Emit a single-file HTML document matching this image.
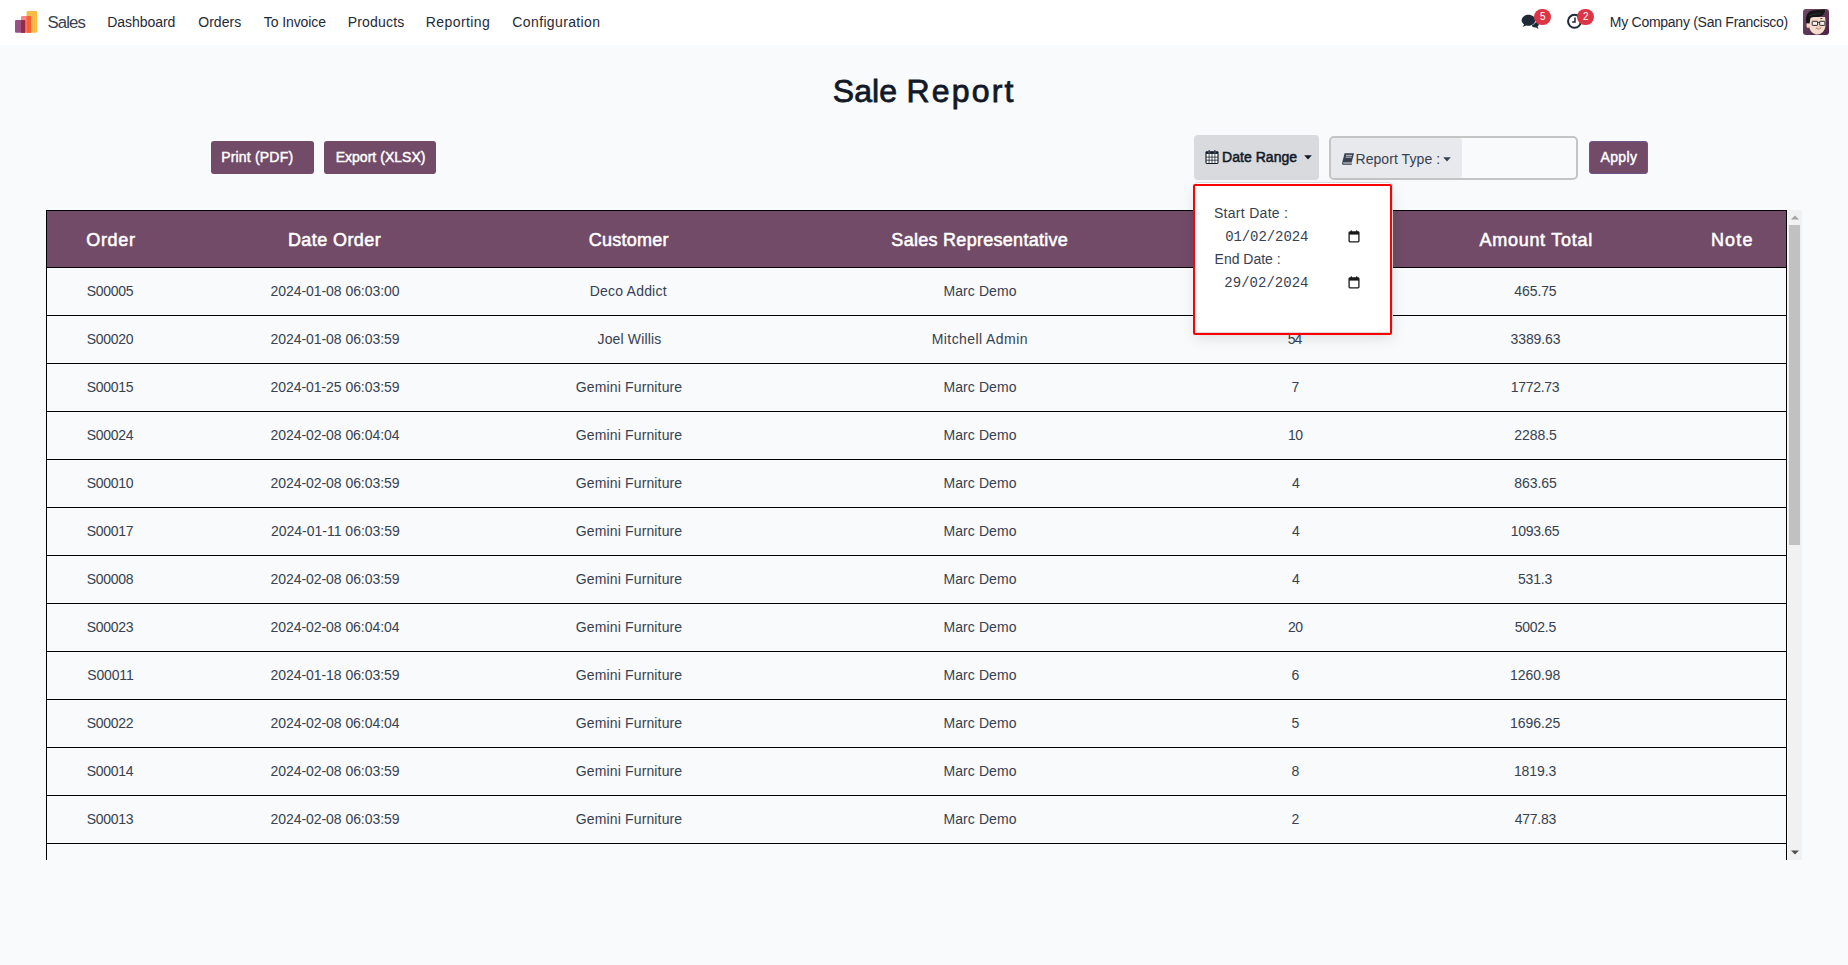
<!DOCTYPE html>
<html lang="en"><head><meta charset="utf-8"><title>Odoo - Sale Report</title>
<style>
html,body{margin:0;padding:0}
body{width:1848px;height:965px;overflow:hidden;position:relative;background:#f9fafb;font-family:"Liberation Sans",sans-serif;font-size:14px;color:#374151}
.t{position:absolute;white-space:pre;text-align:center;margin:0;padding:0}
.abs{position:absolute}
#nav{position:absolute;left:0;top:0;width:1848px;height:45px;background:#fff}
.btn{position:absolute;background:#714b67;border-radius:3px}
.badge{position:absolute;background:#dc3545;border-radius:8px;width:17px;height:16px}
#tbl{position:absolute;left:46px;top:210px;width:1741px;height:650px;overflow:hidden}
.hdr{position:absolute;left:0;top:0;width:1739px;height:56px;background:#714b67;border:1px solid #000}
.row{position:absolute;left:0;width:1739px;height:47px;border:1px solid #000;border-top:none}
#sb{position:absolute;left:1788px;top:210px;width:14px;height:650px;background:#f1f1f1}
#thumb{position:absolute;left:1789px;top:225px;width:11px;height:320px;background:#c1c1c1}
#ddm{position:absolute;left:1194px;top:182px;width:197px;height:149px;border:1px solid #d8dadd;border-radius:4px;background:#fff;box-shadow:0 6px 14px rgba(0,0,0,.10)}
#dd{position:absolute;left:1193px;top:184px;width:195px;height:147px;border:2px solid #ff0000;border-radius:2px}
</style></head><body>

<div id="nav"></div>
<svg class="abs" style="left:14px;top:10px" width="24" height="24" viewBox="0 0 24 24">
<rect x="12.6" y="1" width="10.5" height="21.8" rx="1.4" fill="#fbb945"/>
<rect x="7" y="6.1" width="10" height="16.7" rx="1.2" fill="#f87a7a" opacity="0.9"/>
<rect x="12.6" y="6.1" width="4.4" height="16.7" fill="#f9602b"/>
<rect x="1" y="10.1" width="10.2" height="12.7" rx="1.2" fill="#985184"/>
<rect x="7" y="10.1" width="4.2" height="12.7" fill="#962b48"/>
</svg>
<div class="t" id="brand" style="left:-133.38px;top:9.00px;width:400px;line-height:28px;font-size:16.8px;font-weight:400;color:#374151;letter-spacing:-0.92px;text-indent:-0.92px;">Sales</div>
<div class="t" id="nav0" style="left:-58.69px;top:12.00px;width:400px;line-height:20px;font-size:14px;font-weight:400;color:#1f2937;letter-spacing:-0.05px;text-indent:-0.05px;">Dashboard</div>
<div class="t" id="nav1" style="left:19.76px;top:12.00px;width:400px;line-height:20px;font-size:14px;font-weight:400;color:#1f2937;letter-spacing:0.064px;text-indent:0.064px;">Orders</div>
<div class="t" id="nav2" style="left:94.90px;top:12.00px;width:400px;line-height:20px;font-size:14px;font-weight:400;color:#1f2937;letter-spacing:-0.1px;text-indent:-0.1px;">To Invoice</div>
<div class="t" id="nav3" style="left:175.98px;top:12.00px;width:400px;line-height:20px;font-size:14px;font-weight:400;color:#1f2937;letter-spacing:0.204px;text-indent:0.204px;">Products</div>
<div class="t" id="nav4" style="left:257.79px;top:12.00px;width:400px;line-height:20px;font-size:14px;font-weight:400;color:#1f2937;letter-spacing:0.41px;text-indent:0.41px;">Reporting</div>
<div class="t" id="nav5" style="left:356.21px;top:12.00px;width:400px;line-height:20px;font-size:14px;font-weight:400;color:#1f2937;letter-spacing:0.368px;text-indent:0.368px;">Configuration</div>
<div class="t" id="company" style="left:1499.05px;top:12.00px;width:400px;line-height:20px;font-size:14px;font-weight:400;color:#1f2937;letter-spacing:-0.269px;text-indent:-0.269px;">My Company (San Francisco)</div>
<svg class="abs" style="left:1520px;top:13px" width="20" height="18" viewBox="0 0 20 18">
<path d="M11.2 11.2 C11.6 13.6 14 14.9 16.2 14.4 L18.6 16.2 L17.6 13.6 C19.2 12.4 19.4 10.2 18 8.6 Z" fill="#1f2937"/>
<ellipse cx="8.4" cy="7.3" rx="7.2" ry="5.9" fill="#fff"/>
<path d="M8.4 1.8 C4.6 1.8 1.6 4.2 1.6 7.2 C1.6 8.9 2.6 10.4 4.1 11.4 L2.6 13.9 L6.3 12.4 C7 12.6 7.7 12.7 8.4 12.7 C12.2 12.7 15.2 10.3 15.2 7.2 C15.2 4.2 12.2 1.8 8.4 1.8 Z" fill="#1f2937"/>
</svg>
<div class="badge" style="left:1534px;top:9px"></div>
<div class="t" id="b5" style="left:1342.71px;top:7.00px;width:400px;line-height:20px;font-size:10px;font-weight:400;color:#fff;letter-spacing:0px;">5</div>
<svg class="abs" style="left:1566px;top:12px" width="18" height="18" viewBox="0 0 18 18">
<circle cx="8.5" cy="9.3" r="6.45" fill="none" stroke="#1f2937" stroke-width="2"/>
<path d="M9 5.6 V10.1 H6.1" fill="none" stroke="#1f2937" stroke-width="1.5"/>
</svg>
<div class="badge" style="left:1577px;top:9px"></div>
<div class="t" id="b2" style="left:1385.71px;top:7.00px;width:400px;line-height:20px;font-size:10px;font-weight:400;color:#fff;letter-spacing:0px;">2</div>
<svg class="abs" style="left:1803px;top:9px" width="26" height="26" viewBox="0 0 26 26">
<defs><linearGradient id="ag" x1="0" y1="0" x2="1" y2="1"><stop offset="0" stop-color="#6f4a68"/><stop offset="1" stop-color="#4c2342"/></linearGradient>
<clipPath id="ac"><rect width="26" height="26" rx="3"/></clipPath></defs>
<g clip-path="url(#ac)">
<rect width="26" height="26" fill="url(#ag)"/>
<ellipse cx="5" cy="16" rx="1.5" ry="3" fill="#f3d2bf"/>
<path d="M5.8 8 C5.6 12 5.6 16 6.6 19.5 C7.8 23.2 11 25.6 14.4 25.5 C18 25.4 21.2 22.6 22.2 18.5 C22.8 15.5 22.6 11 22 8 Z" fill="#f8dccb"/>
<path d="M3.4 14.2 C2.4 9.5 3 4.5 7.5 2 C10 0.6 14 1.2 17 0.9 C19.5 0.6 21.5 0.2 21.9 1 C22.4 3.6 20.5 6.4 17 7.6 C14 8.5 10 7.4 7.4 9.2 L6.6 14.5 Z" fill="#161616"/>
<path d="M6 7 C9 5 13 5.6 17.5 4.2" stroke="#3a3a3a" stroke-width="0.7" fill="none"/>
<rect x="9.2" y="12.3" width="5.4" height="4.1" rx="0.5" fill="#f4efe9" stroke="#2e2e2e" stroke-width="1"/>
<rect x="16.7" y="12.3" width="5.2" height="4.1" rx="0.5" fill="#f4efe9" stroke="#2e2e2e" stroke-width="1"/>
<path d="M14.6 13.4 H16.7" stroke="#2e2e2e" stroke-width="0.9"/>
<path d="M17.3 9.6 H19.4" stroke="#222" stroke-width="0.8"/>
<path d="M12.9 19 Q15.6 19.8 18.2 18.8 Q16 21.8 12.9 19 Z" fill="#fff" stroke="#8a5a4a" stroke-width="0.5"/>
<path d="M15.2 17.4 Q16 17.9 16.8 17.3" stroke="#e9a993" stroke-width="0.6" fill="none"/>
</g></svg>
<h1 style="margin:0;font-size:0;line-height:0">
<span class="t" id="title1" style="left:664.85px;top:69.00px;width:400px;line-height:44px;font-size:32px;font-weight:400;color:#111827;letter-spacing:0.052px;text-indent:0.052px;-webkit-text-stroke:0.8px #111827;">Sale</span>
<span class="t" id="title2" style="left:760.02px;top:69.00px;width:400px;line-height:44px;font-size:32px;font-weight:400;color:#111827;letter-spacing:2.176px;text-indent:2.176px;-webkit-text-stroke:0.8px #111827;">Report</span>
</h1>
<div class="btn" style="left:211px;top:141px;width:103px;height:33px"></div>
<div class="btn" style="left:324px;top:141px;width:112px;height:33px"></div>
<div class="t" id="print" style="left:57.10px;top:147.00px;width:400px;line-height:20px;font-size:14px;font-weight:400;color:#fff;letter-spacing:0.192px;text-indent:0.192px;-webkit-text-stroke:0.45px #fff;">Print (PDF)</div>
<div class="t" id="export" style="left:180.57px;top:147.00px;width:400px;line-height:20px;font-size:14px;font-weight:400;color:#fff;letter-spacing:0.033px;text-indent:0.033px;-webkit-text-stroke:0.45px #fff;">Export (XLSX)</div>
<div class="abs" style="left:1194px;top:135.3px;width:124.8px;height:44.3px;background:#d8dadd;border-radius:4px"></div>
<svg class="abs" style="left:1205px;top:149px" width="14" height="16" viewBox="0 0 14 16">
<rect x="1" y="2.7" width="12" height="11.8" rx="0.9" fill="#fff" stroke="#111827" stroke-width="1.1"/>
<rect x="1" y="2.7" width="12" height="2.2" fill="#111827"/>
<rect x="3.3" y="0.9" width="1.7" height="3.2" rx="0.8" fill="#111827" stroke="#d8dadd" stroke-width="0.3"/>
<rect x="9" y="0.9" width="1.7" height="3.2" rx="0.8" fill="#111827" stroke="#d8dadd" stroke-width="0.3"/>
<path d="M1 8.1H13M1 11.2H13M4.1 4.9V14.4M7 4.9V14.4M9.9 4.9V14.4" stroke="#111827" stroke-width="0.75" fill="none"/>
</svg>
<div class="t" id="daterange" style="left:1059.60px;top:147.00px;width:400px;line-height:20px;font-size:14px;font-weight:400;color:#111827;letter-spacing:0.039px;text-indent:0.039px;-webkit-text-stroke:0.5px #111827;">Date Range</div>
<svg class="abs" style="left:1304px;top:155px" width="8" height="5" viewBox="0 0 8 5"><path d="M0.2 0.2H7.8L4 4.6Z" fill="#111827"/></svg>
<div class="abs" style="left:1329.2px;top:136.1px;width:245.3px;height:39.5px;border:2px solid #c4c4c4;border-radius:5px;background:#f9fafb"></div>
<div class="abs" style="left:1331.2px;top:138.1px;width:130.8px;height:39.5px;background:#e7e9ed;border-radius:3px"></div>
<svg class="abs" style="left:1341px;top:152px" width="14" height="14" viewBox="0 0 14 14">
<path d="M3.6 1.2 H13 L10.6 10.6 H1.2 Z" fill="#374151"/>
<path d="M1.2 10.6 C0.6 12 1.2 12.8 2.4 12.8 H10.6 L11.2 11.6 H2.6 C2 11.6 2 10.8 2.6 10.6 Z" fill="#374151"/>
<path d="M5 3.4H11M4.6 5.2H10.6" stroke="#e7e9ed" stroke-width="0.8"/>
</svg>
<div class="t" id="reptype" style="left:1197.81px;top:149.00px;width:400px;line-height:20px;font-size:14px;font-weight:400;color:#374151;letter-spacing:0.072px;text-indent:0.072px;">Report Type :</div>
<svg class="abs" style="left:1443px;top:157px" width="8" height="5" viewBox="0 0 8 5"><path d="M0.2 0.2H7.8L4 4.6Z" fill="#374151"/></svg>
<div class="btn" style="left:1589.3px;top:140.9px;width:56.6px;height:31px;border:1px solid #6a5688"></div>
<div class="t" id="apply" style="left:1418.76px;top:147.00px;width:400px;line-height:20px;font-size:14px;font-weight:400;color:#fff;letter-spacing:0.36px;text-indent:0.36px;-webkit-text-stroke:0.45px #fff;">Apply</div>
<div id="tbl">
<div class="hdr"></div>
<div class="row" style="top:58px"></div>
<div class="row" style="top:106px"></div>
<div class="row" style="top:154px"></div>
<div class="row" style="top:202px"></div>
<div class="row" style="top:250px"></div>
<div class="row" style="top:298px"></div>
<div class="row" style="top:346px"></div>
<div class="row" style="top:394px"></div>
<div class="row" style="top:442px"></div>
<div class="row" style="top:490px"></div>
<div class="row" style="top:538px"></div>
<div class="row" style="top:586px"></div>
<div class="row" style="top:634px"></div>
</div>
<div class="t" id="h0" style="left:-89.40px;top:226.00px;width:400px;line-height:28px;font-size:18px;font-weight:400;color:#fff;letter-spacing:0.64px;text-indent:0.64px;-webkit-text-stroke:0.55px #fff;">Order</div>
<div class="t" id="h1" style="left:134.32px;top:226.00px;width:400px;line-height:28px;font-size:18px;font-weight:400;color:#fff;letter-spacing:0.406px;text-indent:0.406px;-webkit-text-stroke:0.55px #fff;">Date Order</div>
<div class="t" id="h2" style="left:428.67px;top:226.00px;width:400px;line-height:28px;font-size:18px;font-weight:400;color:#fff;letter-spacing:0.237px;text-indent:0.237px;-webkit-text-stroke:0.55px #fff;">Customer</div>
<div class="t" id="h3" style="left:779.62px;top:226.00px;width:400px;line-height:28px;font-size:18px;font-weight:400;color:#fff;letter-spacing:0.283px;text-indent:0.283px;-webkit-text-stroke:0.55px #fff;">Sales Representative</div>
<div class="t" id="h4" style="left:1095.00px;top:226.00px;width:400px;line-height:28px;font-size:18px;font-weight:400;color:#fff;letter-spacing:0px;-webkit-text-stroke:0.55px #fff;">Total Quantity</div>
<div class="t" id="h5" style="left:1335.83px;top:226.00px;width:400px;line-height:28px;font-size:18px;font-weight:400;color:#fff;letter-spacing:0.737px;text-indent:0.737px;-webkit-text-stroke:0.55px #fff;">Amount Total</div>
<div class="t" id="h6" style="left:1531.74px;top:226.00px;width:400px;line-height:28px;font-size:18px;font-weight:400;color:#fff;letter-spacing:1.227px;text-indent:1.227px;-webkit-text-stroke:0.55px #fff;">Note</div>
<div class="t" id="r0c0" style="left:-89.90px;top:281.00px;width:400px;line-height:20px;font-size:14px;font-weight:400;color:#374151;letter-spacing:-0.32px;text-indent:-0.32px;">S00005</div>
<div class="t" id="r0c1" style="left:135.00px;top:281.00px;width:400px;line-height:20px;font-size:14px;font-weight:400;color:#374151;letter-spacing:-0.05px;text-indent:-0.05px;">2024-01-08 06:03:00</div>
<div class="t" id="r0c2" style="left:428.20px;top:281.00px;width:400px;line-height:20px;font-size:14px;font-weight:400;color:#374151;letter-spacing:0.2px;text-indent:0.2px;">Deco Addict</div>
<div class="t" id="r0c3" style="left:780.00px;top:281.00px;width:400px;line-height:20px;font-size:14px;font-weight:400;color:#374151;letter-spacing:0.08px;text-indent:0.08px;">Marc Demo</div>
<div class="t" id="r0c4" style="left:1095.50px;top:281.00px;width:400px;line-height:20px;font-size:14px;font-weight:400;color:#374151;letter-spacing:0px;">5</div>
<div class="t" id="r0c5" style="left:1335.50px;top:281.00px;width:400px;line-height:20px;font-size:14px;font-weight:400;color:#374151;letter-spacing:-0.112px;text-indent:-0.112px;">465.75</div>
<div class="t" id="r1c0" style="left:-89.90px;top:329.00px;width:400px;line-height:20px;font-size:14px;font-weight:400;color:#374151;letter-spacing:-0.32px;text-indent:-0.32px;">S00020</div>
<div class="t" id="r1c1" style="left:135.00px;top:329.00px;width:400px;line-height:20px;font-size:14px;font-weight:400;color:#374151;letter-spacing:-0.05px;text-indent:-0.05px;">2024-01-08 06:03:59</div>
<div class="t" id="r1c2" style="left:429.40px;top:329.00px;width:400px;line-height:20px;font-size:14px;font-weight:400;color:#374151;letter-spacing:0.152px;text-indent:0.152px;">Joel Willis</div>
<div class="t" id="r1c3" style="left:779.60px;top:329.00px;width:400px;line-height:20px;font-size:14px;font-weight:400;color:#374151;letter-spacing:0.427px;text-indent:0.427px;">Mitchell Admin</div>
<div class="t" id="r1c4" style="left:1095.10px;top:329.00px;width:400px;line-height:20px;font-size:14px;font-weight:400;color:#374151;letter-spacing:-0.96px;text-indent:-0.96px;">54</div>
<div class="t" id="r1c5" style="left:1335.50px;top:329.00px;width:400px;line-height:20px;font-size:14px;font-weight:400;color:#374151;letter-spacing:-0.12px;text-indent:-0.12px;">3389.63</div>
<div class="t" id="r2c0" style="left:-89.90px;top:377.00px;width:400px;line-height:20px;font-size:14px;font-weight:400;color:#374151;letter-spacing:-0.32px;text-indent:-0.32px;">S00015</div>
<div class="t" id="r2c1" style="left:135.00px;top:377.00px;width:400px;line-height:20px;font-size:14px;font-weight:400;color:#374151;letter-spacing:-0.05px;text-indent:-0.05px;">2024-01-25 06:03:59</div>
<div class="t" id="r2c2" style="left:429.00px;top:377.00px;width:400px;line-height:20px;font-size:14px;font-weight:400;color:#374151;letter-spacing:0.136px;text-indent:0.136px;">Gemini Furniture</div>
<div class="t" id="r2c3" style="left:780.00px;top:377.00px;width:400px;line-height:20px;font-size:14px;font-weight:400;color:#374151;letter-spacing:0.08px;text-indent:0.08px;">Marc Demo</div>
<div class="t" id="r2c4" style="left:1095.50px;top:377.00px;width:400px;line-height:20px;font-size:14px;font-weight:400;color:#374151;letter-spacing:0px;">7</div>
<div class="t" id="r2c5" style="left:1335.10px;top:377.00px;width:400px;line-height:20px;font-size:14px;font-weight:400;color:#374151;letter-spacing:-0.281px;text-indent:-0.281px;">1772.73</div>
<div class="t" id="r3c0" style="left:-89.90px;top:425.00px;width:400px;line-height:20px;font-size:14px;font-weight:400;color:#374151;letter-spacing:-0.32px;text-indent:-0.32px;">S00024</div>
<div class="t" id="r3c1" style="left:135.00px;top:425.00px;width:400px;line-height:20px;font-size:14px;font-weight:400;color:#374151;letter-spacing:-0.053px;text-indent:-0.053px;">2024-02-08 06:04:04</div>
<div class="t" id="r3c2" style="left:429.00px;top:425.00px;width:400px;line-height:20px;font-size:14px;font-weight:400;color:#374151;letter-spacing:0.136px;text-indent:0.136px;">Gemini Furniture</div>
<div class="t" id="r3c3" style="left:780.00px;top:425.00px;width:400px;line-height:20px;font-size:14px;font-weight:400;color:#374151;letter-spacing:0.08px;text-indent:0.08px;">Marc Demo</div>
<div class="t" id="r3c4" style="left:1095.50px;top:425.00px;width:400px;line-height:20px;font-size:14px;font-weight:400;color:#374151;letter-spacing:-0.56px;text-indent:-0.56px;">10</div>
<div class="t" id="r3c5" style="left:1335.50px;top:425.00px;width:400px;line-height:20px;font-size:14px;font-weight:400;color:#374151;letter-spacing:-0.064px;text-indent:-0.064px;">2288.5</div>
<div class="t" id="r4c0" style="left:-89.90px;top:473.00px;width:400px;line-height:20px;font-size:14px;font-weight:400;color:#374151;letter-spacing:-0.32px;text-indent:-0.32px;">S00010</div>
<div class="t" id="r4c1" style="left:135.00px;top:473.00px;width:400px;line-height:20px;font-size:14px;font-weight:400;color:#374151;letter-spacing:-0.05px;text-indent:-0.05px;">2024-02-08 06:03:59</div>
<div class="t" id="r4c2" style="left:429.00px;top:473.00px;width:400px;line-height:20px;font-size:14px;font-weight:400;color:#374151;letter-spacing:0.136px;text-indent:0.136px;">Gemini Furniture</div>
<div class="t" id="r4c3" style="left:780.00px;top:473.00px;width:400px;line-height:20px;font-size:14px;font-weight:400;color:#374151;letter-spacing:0.08px;text-indent:0.08px;">Marc Demo</div>
<div class="t" id="r4c4" style="left:1095.90px;top:473.00px;width:400px;line-height:20px;font-size:14px;font-weight:400;color:#374151;letter-spacing:0px;">4</div>
<div class="t" id="r4c5" style="left:1335.50px;top:473.00px;width:400px;line-height:20px;font-size:14px;font-weight:400;color:#374151;letter-spacing:-0.064px;text-indent:-0.064px;">863.65</div>
<div class="t" id="r5c0" style="left:-89.90px;top:521.00px;width:400px;line-height:20px;font-size:14px;font-weight:400;color:#374151;letter-spacing:-0.32px;text-indent:-0.32px;">S00017</div>
<div class="t" id="r5c1" style="left:135.40px;top:521.00px;width:400px;line-height:20px;font-size:14px;font-weight:400;color:#374151;letter-spacing:-0.009px;text-indent:-0.009px;">2024-01-11 06:03:59</div>
<div class="t" id="r5c2" style="left:429.00px;top:521.00px;width:400px;line-height:20px;font-size:14px;font-weight:400;color:#374151;letter-spacing:0.136px;text-indent:0.136px;">Gemini Furniture</div>
<div class="t" id="r5c3" style="left:780.00px;top:521.00px;width:400px;line-height:20px;font-size:14px;font-weight:400;color:#374151;letter-spacing:0.08px;text-indent:0.08px;">Marc Demo</div>
<div class="t" id="r5c4" style="left:1095.90px;top:521.00px;width:400px;line-height:20px;font-size:14px;font-weight:400;color:#374151;letter-spacing:0px;">4</div>
<div class="t" id="r5c5" style="left:1335.10px;top:521.00px;width:400px;line-height:20px;font-size:14px;font-weight:400;color:#374151;letter-spacing:-0.281px;text-indent:-0.281px;">1093.65</div>
<div class="t" id="r6c0" style="left:-89.90px;top:569.00px;width:400px;line-height:20px;font-size:14px;font-weight:400;color:#374151;letter-spacing:-0.32px;text-indent:-0.32px;">S00008</div>
<div class="t" id="r6c1" style="left:135.00px;top:569.00px;width:400px;line-height:20px;font-size:14px;font-weight:400;color:#374151;letter-spacing:-0.05px;text-indent:-0.05px;">2024-02-08 06:03:59</div>
<div class="t" id="r6c2" style="left:429.00px;top:569.00px;width:400px;line-height:20px;font-size:14px;font-weight:400;color:#374151;letter-spacing:0.136px;text-indent:0.136px;">Gemini Furniture</div>
<div class="t" id="r6c3" style="left:780.00px;top:569.00px;width:400px;line-height:20px;font-size:14px;font-weight:400;color:#374151;letter-spacing:0.08px;text-indent:0.08px;">Marc Demo</div>
<div class="t" id="r6c4" style="left:1095.90px;top:569.00px;width:400px;line-height:20px;font-size:14px;font-weight:400;color:#374151;letter-spacing:0px;">4</div>
<div class="t" id="r6c5" style="left:1335.10px;top:569.00px;width:400px;line-height:20px;font-size:14px;font-weight:400;color:#374151;letter-spacing:-0.22px;text-indent:-0.22px;">531.3</div>
<div class="t" id="r7c0" style="left:-89.90px;top:617.00px;width:400px;line-height:20px;font-size:14px;font-weight:400;color:#374151;letter-spacing:-0.32px;text-indent:-0.32px;">S00023</div>
<div class="t" id="r7c1" style="left:135.00px;top:617.00px;width:400px;line-height:20px;font-size:14px;font-weight:400;color:#374151;letter-spacing:-0.053px;text-indent:-0.053px;">2024-02-08 06:04:04</div>
<div class="t" id="r7c2" style="left:429.00px;top:617.00px;width:400px;line-height:20px;font-size:14px;font-weight:400;color:#374151;letter-spacing:0.136px;text-indent:0.136px;">Gemini Furniture</div>
<div class="t" id="r7c3" style="left:780.00px;top:617.00px;width:400px;line-height:20px;font-size:14px;font-weight:400;color:#374151;letter-spacing:0.08px;text-indent:0.08px;">Marc Demo</div>
<div class="t" id="r7c4" style="left:1095.50px;top:617.00px;width:400px;line-height:20px;font-size:14px;font-weight:400;color:#374151;letter-spacing:-0.56px;text-indent:-0.56px;">20</div>
<div class="t" id="r7c5" style="left:1335.50px;top:617.00px;width:400px;line-height:20px;font-size:14px;font-weight:400;color:#374151;letter-spacing:-0.24px;text-indent:-0.24px;">5002.5</div>
<div class="t" id="r8c0" style="left:-89.50px;top:665.00px;width:400px;line-height:20px;font-size:14px;font-weight:400;color:#374151;letter-spacing:-0.16px;text-indent:-0.16px;">S00011</div>
<div class="t" id="r8c1" style="left:135.00px;top:665.00px;width:400px;line-height:20px;font-size:14px;font-weight:400;color:#374151;letter-spacing:-0.05px;text-indent:-0.05px;">2024-01-18 06:03:59</div>
<div class="t" id="r8c2" style="left:429.00px;top:665.00px;width:400px;line-height:20px;font-size:14px;font-weight:400;color:#374151;letter-spacing:0.136px;text-indent:0.136px;">Gemini Furniture</div>
<div class="t" id="r8c3" style="left:780.00px;top:665.00px;width:400px;line-height:20px;font-size:14px;font-weight:400;color:#374151;letter-spacing:0.08px;text-indent:0.08px;">Marc Demo</div>
<div class="t" id="r8c4" style="left:1095.50px;top:665.00px;width:400px;line-height:20px;font-size:14px;font-weight:400;color:#374151;letter-spacing:0px;">6</div>
<div class="t" id="r8c5" style="left:1335.10px;top:665.00px;width:400px;line-height:20px;font-size:14px;font-weight:400;color:#374151;letter-spacing:-0.03px;text-indent:-0.03px;">1260.98</div>
<div class="t" id="r9c0" style="left:-89.90px;top:713.00px;width:400px;line-height:20px;font-size:14px;font-weight:400;color:#374151;letter-spacing:-0.32px;text-indent:-0.32px;">S00022</div>
<div class="t" id="r9c1" style="left:135.00px;top:713.00px;width:400px;line-height:20px;font-size:14px;font-weight:400;color:#374151;letter-spacing:-0.053px;text-indent:-0.053px;">2024-02-08 06:04:04</div>
<div class="t" id="r9c2" style="left:429.00px;top:713.00px;width:400px;line-height:20px;font-size:14px;font-weight:400;color:#374151;letter-spacing:0.136px;text-indent:0.136px;">Gemini Furniture</div>
<div class="t" id="r9c3" style="left:780.00px;top:713.00px;width:400px;line-height:20px;font-size:14px;font-weight:400;color:#374151;letter-spacing:0.08px;text-indent:0.08px;">Marc Demo</div>
<div class="t" id="r9c4" style="left:1095.50px;top:713.00px;width:400px;line-height:20px;font-size:14px;font-weight:400;color:#374151;letter-spacing:0px;">5</div>
<div class="t" id="r9c5" style="left:1335.10px;top:713.00px;width:400px;line-height:20px;font-size:14px;font-weight:400;color:#374151;letter-spacing:-0.03px;text-indent:-0.03px;">1696.25</div>
<div class="t" id="r10c0" style="left:-89.90px;top:761.00px;width:400px;line-height:20px;font-size:14px;font-weight:400;color:#374151;letter-spacing:-0.32px;text-indent:-0.32px;">S00014</div>
<div class="t" id="r10c1" style="left:135.00px;top:761.00px;width:400px;line-height:20px;font-size:14px;font-weight:400;color:#374151;letter-spacing:-0.05px;text-indent:-0.05px;">2024-02-08 06:03:59</div>
<div class="t" id="r10c2" style="left:429.00px;top:761.00px;width:400px;line-height:20px;font-size:14px;font-weight:400;color:#374151;letter-spacing:0.136px;text-indent:0.136px;">Gemini Furniture</div>
<div class="t" id="r10c3" style="left:780.00px;top:761.00px;width:400px;line-height:20px;font-size:14px;font-weight:400;color:#374151;letter-spacing:0.08px;text-indent:0.08px;">Marc Demo</div>
<div class="t" id="r10c4" style="left:1095.50px;top:761.00px;width:400px;line-height:20px;font-size:14px;font-weight:400;color:#374151;letter-spacing:0px;">8</div>
<div class="t" id="r10c5" style="left:1335.10px;top:761.00px;width:400px;line-height:20px;font-size:14px;font-weight:400;color:#374151;letter-spacing:-0.08px;text-indent:-0.08px;">1819.3</div>
<div class="t" id="r11c0" style="left:-89.90px;top:809.00px;width:400px;line-height:20px;font-size:14px;font-weight:400;color:#374151;letter-spacing:-0.32px;text-indent:-0.32px;">S00013</div>
<div class="t" id="r11c1" style="left:135.00px;top:809.00px;width:400px;line-height:20px;font-size:14px;font-weight:400;color:#374151;letter-spacing:-0.05px;text-indent:-0.05px;">2024-02-08 06:03:59</div>
<div class="t" id="r11c2" style="left:429.00px;top:809.00px;width:400px;line-height:20px;font-size:14px;font-weight:400;color:#374151;letter-spacing:0.136px;text-indent:0.136px;">Gemini Furniture</div>
<div class="t" id="r11c3" style="left:780.00px;top:809.00px;width:400px;line-height:20px;font-size:14px;font-weight:400;color:#374151;letter-spacing:0.08px;text-indent:0.08px;">Marc Demo</div>
<div class="t" id="r11c4" style="left:1095.50px;top:809.00px;width:400px;line-height:20px;font-size:14px;font-weight:400;color:#374151;letter-spacing:0px;">2</div>
<div class="t" id="r11c5" style="left:1335.50px;top:809.00px;width:400px;line-height:20px;font-size:14px;font-weight:400;color:#374151;letter-spacing:-0.24px;text-indent:-0.24px;">477.83</div>
<div id="sb"></div><div id="thumb"></div>
<svg class="abs" style="left:1791px;top:215px" width="8" height="5" viewBox="0 0 8 5"><path d="M0 4.6H8L4 0.4Z" fill="#a3a3a3"/></svg>
<svg class="abs" style="left:1791px;top:850px" width="8" height="5" viewBox="0 0 8 5"><path d="M0 0.4H8L4 4.6Z" fill="#505050"/></svg>
<div id="ddm"></div><div id="dd"></div>
<div class="t" id="sd" style="left:1050.95px;top:203.00px;width:400px;line-height:20px;font-size:14px;font-weight:400;color:#374151;letter-spacing:0.3px;text-indent:0.3px;">Start Date :</div>
<div class="t" id="ed" style="left:1047.64px;top:249.00px;width:400px;line-height:20px;font-size:14px;font-weight:400;color:#374151;letter-spacing:-0.014px;text-indent:-0.014px;">End Date :</div>
<div class="t" id="d1" style="left:1066.81px;top:227.00px;width:400px;line-height:20px;font-size:14px;font-weight:400;color:#374151;letter-spacing:-0.075px;text-indent:-0.075px;font-family:'Liberation Mono', monospace;">01/02/2024</div>
<div class="t" id="d2" style="left:1066.41px;top:273.00px;width:400px;line-height:20px;font-size:14px;font-weight:400;color:#374151;letter-spacing:0.014px;text-indent:0.014px;font-family:'Liberation Mono', monospace;">29/02/2024</div>
<svg class="abs" style="left:1348px;top:230px" width="12" height="13" viewBox="0 0 12 13">
<rect x="1.1" y="2" width="9.8" height="9.9" rx="0.8" fill="none" stroke="#1a1a1a" stroke-width="1.3"/>
<rect x="1.1" y="2" width="9.8" height="2.6" fill="#1a1a1a"/>
<rect x="2.7" y="0.4" width="1.3" height="2" fill="#1a1a1a"/><rect x="8" y="0.4" width="1.3" height="2" fill="#1a1a1a"/>
</svg>
<svg class="abs" style="left:1348px;top:276px" width="12" height="13" viewBox="0 0 12 13">
<rect x="1.1" y="2" width="9.8" height="9.9" rx="0.8" fill="none" stroke="#1a1a1a" stroke-width="1.3"/>
<rect x="1.1" y="2" width="9.8" height="2.6" fill="#1a1a1a"/>
<rect x="2.7" y="0.4" width="1.3" height="2" fill="#1a1a1a"/><rect x="8" y="0.4" width="1.3" height="2" fill="#1a1a1a"/>
</svg>
</body></html>
